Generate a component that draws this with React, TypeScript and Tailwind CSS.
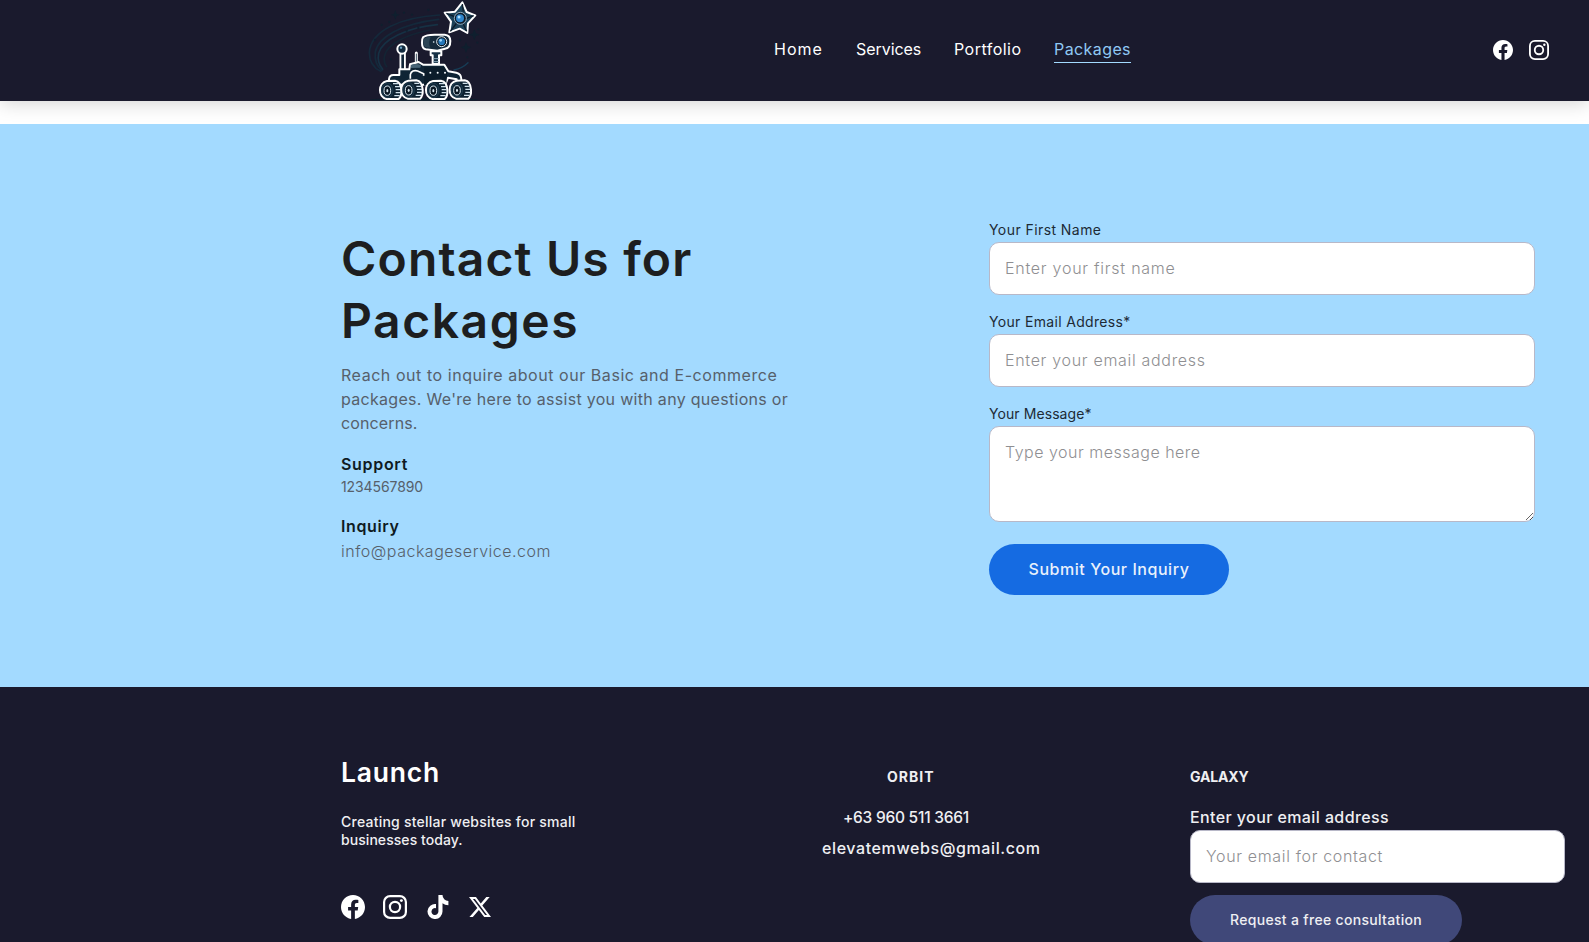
import type { ReactNode } from "react";

function Facebook({ className }: { className: string }) {
  return (
    <svg viewBox="0 0 24 24" className={className} fill="currentColor">
      <path d="M24 12.07C24 5.4 18.63 0 12 0S0 5.4 0 12.07C0 18.1 4.39 23.1 10.13 24v-8.44H7.08v-3.49h3.05V9.41c0-3.02 1.79-4.69 4.53-4.69 1.31 0 2.68.24 2.68.24v2.97h-1.51c-1.49 0-1.96.93-1.96 1.89v2.25h3.33l-.53 3.49h-2.8V24C19.61 23.1 24 18.1 24 12.07z" />
    </svg>
  );
}

function Instagram({ className }: { className: string }) {
  return (
    <svg viewBox="0 0 24 24" className={className} fill="none" stroke="currentColor" strokeWidth="2.2">
      <rect x="1.1" y="1.1" width="21.8" height="21.8" rx="6" />
      <circle cx="12" cy="12" r="5.1" />
      <circle cx="18.4" cy="5.6" r="1.45" fill="currentColor" stroke="none" />
    </svg>
  );
}

function TikTok({ className }: { className: string }) {
  return (
    <svg viewBox="0 0 24 24" className={className} fill="currentColor">
      <path d="M23.4 10.2a9.8 9.8 0 0 1-5.9-1.9v8.2A7.5 7.5 0 1 1 11 9.1v4.2a3.45 3.45 0 1 0 2.4 3.2V0h4.1a5.9 5.9 0 0 0 5.9 5.9z" />
    </svg>
  );
}

function XLogo({ className }: { className: string }) {
  return (
    <svg viewBox="0 0 24 24" className={className} fill="currentColor">
      <path d="M18.9 1.15h3.68l-8.04 9.19L24 22.85h-7.41l-5.8-7.58-6.64 7.58H.47l8.6-9.83L0 1.15h7.59l5.24 6.93zM17.61 20.64h2.04L6.49 3.24H4.3z" />
    </svg>
  );
}

const wheels = [
  { cx: 119, cy: 272 },
  { cx: 183, cy: 271 },
  { cx: 257, cy: 272 },
  { cx: 328, cy: 271 },
];

const specks = [
  [95, 75], [118, 66], [162, 38], [186, 44], [170, 92], [123, 178], [352, 172], [382, 128], [385, 88],
  [235, 30], [75, 120], [330, 120], [205, 84],
];

function RoverLogo() {
  return (
    <svg viewBox="0 0 450 303" className="block h-[101px] w-[150px]" fill="none">
      <g stroke="#14293b" strokeWidth="5" strokeLinecap="round">
        <path d="M268 45C150 52 62 92 58 158c0 28 14 46 34 56" />
        <path d="M266 58C150 72 84 112 76 156c-3 24 6 44 20 56" />
        <path d="M262 74c-92 8-166 46-176 86-4 20 2 36 12 48" stroke="#163144" />
        <path d="M240 90C168 104 112 132 104 166c-4 16 0 26 6 34" stroke="#132434" />
      </g>
      <path d="M312 210c18-4 32-12 42-22" stroke="#173d56" strokeWidth="4" strokeLinecap="round" />
      <g fill="#0f1f2e">
        {specks.map(([x, y]) => (
          <circle key={`${x}-${y}`} cx={x} cy={y} r="3.4" />
        ))}
        <path d="m136 30 4 11 9 3-9 4-4 11-4-11-9-4 9-3zM373 88l5 12 11 4-11 4-5 13-5-13-11-4 11-4zM348 126l5 12 11 4-11 4-5 13-5-13-11-4 11-4z" />
        <ellipse cx="222" cy="299" rx="162" ry="5" />
      </g>

      <path
        d="m337 7 13 29 26 10-22 24-2 29-23-13-31 11 5-32-19-27 31-3z"
        fill="#1c4258"
        stroke="#fff"
        strokeWidth="6"
        strokeLinejoin="round"
      />
      <path d="m337 12 3 23M371 47l-21 8M350 94l-10-22M301 94l19-25M289 40l25 10" stroke="#0d1c2b" strokeWidth="4" />
      <circle cx="331" cy="55" r="18" fill="#0c1b29" stroke="#a9c2d2" strokeWidth="2.5" />
      <circle cx="330" cy="55" r="12" fill="#2f86cb" />
      <circle cx="327" cy="51" r="4.5" fill="#a9dcff" />

      <path d="M199 188v-29" stroke="#fff" strokeWidth="9" strokeLinecap="round" />
      <path d="M199 188v-27" stroke="#3b5363" strokeWidth="3" />
      <path d="M158 212v-54" stroke="#fff" strokeWidth="19" />
      <path d="M158 214v-56" stroke="#12273a" strokeWidth="8" />
      <circle cx="156" cy="147" r="14" fill="#132b3f" stroke="#fff" strokeWidth="6" />
      <circle cx="153" cy="143" r="3.5" fill="#6ea3c6" />

      <path d="M242 154h32v12h-7v26h-19v-26h-6z" fill="#173246" stroke="#fff" strokeWidth="6" strokeLinejoin="round" />
      <path d="M250 176h16M250 185h16" stroke="#8fa9b9" strokeWidth="3" />
      <path
        d="M219 112c8-7 22-8 35-8h30c12 1 17 8 17 19 0 15-5 22-16 23l-23 6-35-4c-8-2-11-10-11-20 0-7 0-12 3-16z"
        fill="#15293a"
        stroke="#fff"
        strokeWidth="6"
      />
      <path d="M222 116c6-5 14-5 20-5-5 9-6 23-1 32l-14-1c-7-5-8-18-5-26z" fill="#2d4555" />
      <circle cx="251" cy="126" r="2.5" fill="#e8f4fb" />
      <circle cx="275" cy="125" r="15" fill="#0a1723" stroke="#e3f0f8" strokeWidth="3" />
      <circle cx="275" cy="125" r="10" fill="#2678b9" />
      <circle cx="272" cy="121" r="4" fill="#9ed5fb" />

      <path
        d="M148 208h30l2-15 26-7 13 8h64l12 20 24 4c10 2 15 9 15 20v12h-14v-12l-26-5-8 21H143l-12-6v11h-14v-22c1-8 6-12 13-12h18z"
        fill="#0f2435"
        stroke="#fff"
        strokeWidth="6"
        strokeLinejoin="round"
      />
      <path d="M183 195c10-4 20-4 30 1l-2 7-28 1z" fill="#476477" />
      <path d="M222 202h61l8 17-2 32-67 6z" fill="#0b1c2a" />
      <path d="M181 236v-12c2-11 12-14 22-11l18 8v6" stroke="#fff" strokeWidth="5" />
      <g fill="#f2f8fc">
        <circle cx="241" cy="218" r="3" />
        <circle cx="263" cy="218" r="3" />
        <circle cx="285" cy="218" r="3" />
      </g>

      {wheels.map(({ cx, cy }) => (
        <g key={cx} transform={`translate(${cx} ${cy})`}>
          <path
            d="M-8-29C-36-24-36 20-9 25h36C33 20 36 10 35-2 34-18 28-28 16-30z"
            fill="#0d2131"
            stroke="#fff"
            strokeWidth="6"
          />
          <path d="M10-21h15M16-12h15M18-3h15M18 6h15M14 15h16" stroke="#cfe0ea" strokeWidth="3.6" />
          <ellipse cx="-7" cy="-1" rx="17" ry="22" fill="#10283a" stroke="#2b485b" strokeWidth="2" />
          <ellipse cx="-7" cy="0" rx="10" ry="14" fill="#0a1723" stroke="#dbe8f0" strokeWidth="3" />
          <ellipse cx="-7" cy="0" rx="3" ry="5" fill="#dbe8f0" />
        </g>
      ))}
    </svg>
  );
}

const inputClass =
  "block w-full rounded-[10px] border border-[#b8b8c8] bg-white px-[15px] text-base font-light text-[#1d1e20] placeholder:text-[#8f8f92] outline-none";

function Field({ label, labelClass, children }: { label: string; labelClass: string; children: ReactNode }) {
  return (
    <label className="block">
      <span className={`block h-[22px] text-sm leading-5 text-[#1d2a35] ${labelClass}`}>{label}</span>
      {children}
    </label>
  );
}

function Header() {
  return (
    <header className="relative z-10 flex h-[101px] items-center justify-between bg-[#1a1a2d] pr-10 pl-[350px] text-white shadow-[0_2px_18px_rgba(0,0,0,0.18)]">
      <div className="flex items-center">
        <RoverLogo />
        <nav className="mb-0.5 ml-[274px] flex gap-8 text-base leading-6">
          <a className="w-[50px] tracking-[1px]">Home</a>
          <a className="w-[66px] tracking-[-0.05px]">Services</a>
          <a className="w-[68px] tracking-[0.47px]">Portfolio</a>
          <a className="w-[77px] border-b border-[#a3daff] pb-px tracking-[0.41px] whitespace-nowrap text-[#90c8f4]">Packages</a>
        </nav>
      </div>
      <div className="mb-0.5 flex gap-4">
        <Facebook className="size-5" />
        <Instagram className="size-5" />
      </div>
    </header>
  );
}

function Contact() {
  return (
    <section className="mt-[23px] flex h-[563px] bg-[#a3daff] pl-[341px]">
      <div className="w-[648px] pt-[104px] whitespace-nowrap text-[#56606b]">
        <h1 className="text-[48px] leading-[62px] font-semibold text-[#1d1e20]">
          <span className="block tracking-[1.15px]">Contact Us for</span>
          <span className="block tracking-[1.55px]">Packages</span>
        </h1>
        <p className="mt-[11px] text-base leading-6">
          <span className="block tracking-[0.55px]">Reach out to inquire about our Basic and E-commerce</span>
          <span className="block tracking-[0.3px]">packages. We're here to assist you with any questions or</span>
          <span className="block tracking-[0.12px]">concerns.</span>
        </p>
        <h2 className="mt-[17px] text-base leading-6 font-semibold tracking-[0.68px] text-[#0f1a22]">Support</h2>
        <p className="text-sm leading-[21px] tracking-[-0.1px]">1234567890</p>
        <h2 className="mt-[17px] text-base leading-6 font-semibold tracking-[0.61px] text-[#0f1a22]">Inquiry</h2>
        <p className="text-base leading-[26px] font-light tracking-[0.51px]">info@packageservice.com</p>
      </div>
      <form className="flex w-[546px] flex-col gap-[18px] pt-[96px]">
        <Field label="Your First Name" labelClass="tracking-[0.43px]">
          <input className={`${inputClass} h-[53px] pb-0.5 tracking-[0.75px]`} placeholder="Enter your first name" />
        </Field>
        <Field label="Your Email Address*" labelClass="-mt-px tracking-[0.33px]">
          <input className={`${inputClass} h-[53px] pb-0.5 tracking-[0.69px]`} placeholder="Enter your email address" />
        </Field>
        <Field label="Your Message*" labelClass="-mt-px tracking-[0.08px]">
          <textarea
            className={`${inputClass} h-24 resize-y py-[13px] leading-6 tracking-[0.5px]`}
            placeholder="Type your message here"
          />
        </Field>
        <button
          type="button"
          className="mt-1 h-[51px] w-60 rounded-full bg-[#156be2] pb-0.5 text-base font-medium tracking-[0.55px] whitespace-nowrap text-[#e9f1fc]"
        >
          Submit Your Inquiry
        </button>
      </form>
    </section>
  );
}

function Footer() {
  return (
    <footer className="flex h-[255px] overflow-hidden bg-[#1a1a2d] pl-[341px] whitespace-nowrap text-[#efeff2]">
      <div className="w-[481px] pt-[69px]">
        <h2 className="text-[26.5px] leading-8 font-semibold tracking-[0.8px] text-white">Launch</h2>
        <p className="mt-[25px] text-sm leading-[18px] font-medium">
          <span className="block tracking-[0.23px]">Creating stellar websites for small</span>
          <span className="block tracking-[0.06px]">businesses today.</span>
        </p>
        <div className="mt-[46px] flex items-center text-white">
          <Facebook className="size-6" />
          <Instagram className="ml-[18px] size-6" />
          <TikTok className="ml-[18px] size-6" />
          <XLogo className="ml-5 size-[22px]" />
        </div>
      </div>
      <div className="w-[368px] pt-20 font-medium">
        <h3 className="ml-[65px] text-sm leading-5 font-bold tracking-[1px]">ORBIT</h3>
        <p className="mt-[19px] ml-[21px] text-[15.5px] leading-6 tracking-[-0.25px]">+63 960 511 3661</p>
        <p className="mt-1.5 text-base leading-6 tracking-[0.6px]">elevatemwebs@gmail.com</p>
      </div>
      <form className="w-[375px] pt-20">
        <h3 className="text-sm leading-5 font-bold tracking-[-0.16px]">GALAXY</h3>
        <label className="mt-[18px] block">
          <span className="block h-[25px] text-base leading-6 font-medium tracking-[0.4px]">Enter your email address</span>
          <input className={`${inputClass} h-[53px] pb-0.5 tracking-[0.65px]`} placeholder="Your email for contact" />
        </label>
        <button
          type="button"
          className="mt-3 h-[50px] w-[272px] rounded-full bg-[#404879] text-sm font-medium tracking-[0.32px]"
        >
          Request a free consultation
        </button>
      </form>
    </footer>
  );
}

export default function App() {
  return (
    <main className="h-[942px] w-full overflow-hidden bg-white font-[Inter,sans-serif]">
      <Header />
      <Contact />
      <Footer />
    </main>
  );
}
